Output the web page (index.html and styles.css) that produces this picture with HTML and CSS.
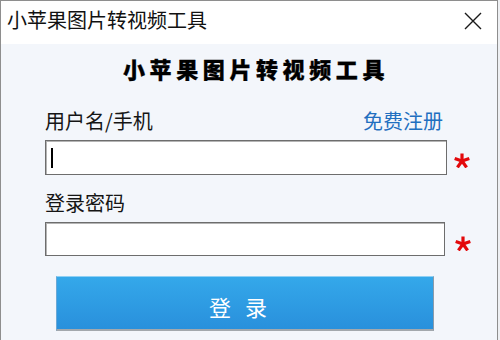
FILE: index.html
```html
<!DOCTYPE html>
<html lang="zh-CN">
<head>
<meta charset="utf-8">
<title>小苹果图片转视频工具</title>
<link rel="stylesheet" href="styles.css">
</head>
<body>
<div class="window">
  <div class="titlebar">
    <span class="title">小苹果图片转视频工具</span>
    <svg class="close" width="18" height="18" viewBox="0 0 18 18"><path d="M1 1 L17 17 M17 1 L1 17" stroke="#1a1a1a" stroke-width="1.4" fill="none"/></svg>
  </div>
  <div class="content">
    <div class="heading">小苹果图片转视频工具</div>
    <div class="form">
      <div class="label-row">
        <span class="label">用户名/手机</span>
        <span class="link">免费注册</span>
      </div>
      <div class="input-row">
        <div class="input input-user"><span class="caret"></span></div>
        <svg class="star" width="16" height="15" viewBox="0 0 16 15"><g stroke="#e3090b" stroke-width="3.2" fill="none"><path d="M8 8 L8 0.5"/><path d="M8 8 L15.3 5.4"/><path d="M8 8 L12.6 14.4"/><path d="M8 8 L3.4 14.4"/><path d="M8 8 L0.7 5.4"/></g></svg>
      </div>
      <div class="label-row label-row-2">
        <span class="label">登录密码</span>
      </div>
      <div class="input-row">
        <div class="input input-pass"></div>
        <svg class="star star-2" width="16" height="15" viewBox="0 0 16 15"><g stroke="#e3090b" stroke-width="3.2" fill="none"><path d="M8 8 L8 0.5"/><path d="M8 8 L15.3 5.4"/><path d="M8 8 L12.6 14.4"/><path d="M8 8 L3.4 14.4"/><path d="M8 8 L0.7 5.4"/></g></svg>
      </div>
      <div class="button">登录</div>
    </div>
  </div>
</div>
</body>
</html>
```

FILE: styles.css
```css
html, body {
  margin: 0;
  padding: 0;
}
body {
  width: 500px;
  height: 340px;
  overflow: hidden;
  background: #eef0f3;
  font-family: "Noto Sans CJK SC", "Noto Sans", sans-serif;
}
.window {
  width: 496px;
  height: 339px;
  border: 1px solid #8e8e8e;
  border-bottom: none;
  background: #f3f6fb;
}
.titlebar {
  height: 43px;
  background: #ffffff;
  display: flex;
  justify-content: space-between;
  align-items: flex-start;
}
.title {
  font-size: 20px;
  line-height: 20px;
  color: #111;
  margin-top: 9px;
  margin-left: 6px;
}
.close {
  margin-top: 11px;
  margin-right: 15px;
}
.content {
  padding-top: 13px;
}
.heading {
  font-size: 22px;
  line-height: 22px;
  font-weight: 900;
  letter-spacing: 4.6px;
  color: #000;
  text-align: center;
  padding-left: 14px;
  -webkit-text-stroke: 0.3px #000;
}
.form {
  margin-left: 44px;
  margin-top: 32px;
}
.label-row {
  width: 402px;
  display: flex;
  justify-content: space-between;
  font-size: 20px;
  line-height: 20px;
}
.label {
  color: #151515;
}
.link {
  color: #1f6fc0;
  margin-right: 4px;
}
.input-row {
  display: flex;
  align-items: flex-start;
  margin-top: 9px;
}
.input {
  box-sizing: border-box;
  background: #fff;
  border: 1px solid #6d6d6d;
  box-shadow: inset 1px 1px 0 #b4b4b4;
  display: flex;
  align-items: center;
}
.input-user {
  width: 402px;
  height: 35px;
}
.input-pass {
  width: 400px;
  height: 34px;
}
.caret {
  width: 2px;
  height: 20px;
  background: #000;
  margin-left: 5px;
}
.star {
  margin-left: 7px;
  margin-top: 13px;
}
.star-2 {
  margin-left: 10px;
  margin-top: 14px;
}
.label-row-2 {
  margin-top: 18px;
}
.button {
  box-sizing: border-box;
  width: 378px;
  height: 55px;
  margin-top: 20px;
  margin-left: 11px;
  background: linear-gradient(#34a8ea, #2990dc);
  border-top: 1px solid #8fd0f4;
  border-left: 1px solid #6aa8d6;
  border-right: 1px solid #8a9bab;
  border-bottom: 2px solid #a3a8ad;
  color: #fff;
  font-size: 22px;
  line-height: 22px;
  letter-spacing: 14px;
  text-align: center;
  padding-top: 18px;
}
```
